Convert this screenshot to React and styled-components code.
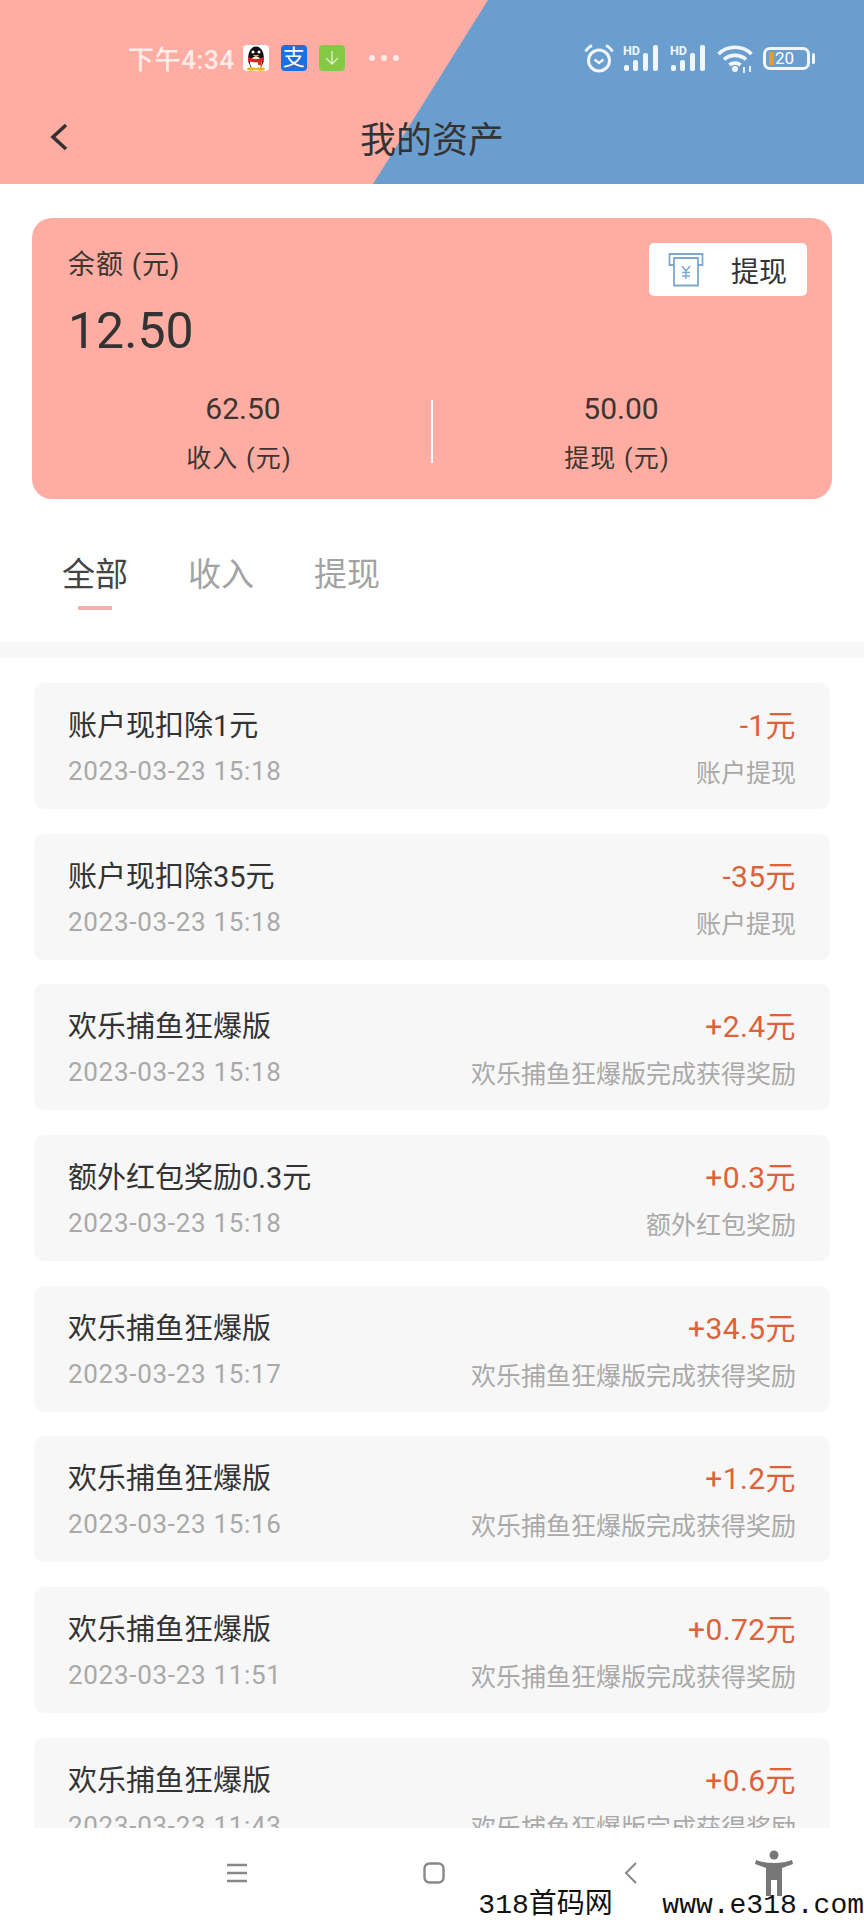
import React from 'react';
import styled, { createGlobalStyle } from 'styled-components';

const GlobalStyle = createGlobalStyle`
    html, body {
        margin: 0;
        padding: 0;
        background: #ffffff;
    }
    body {
        font-family: Roboto, "Noto Sans CJK SC", sans-serif;
        color: #333333;
    }
`;

const Page = styled.div`
    position: relative;
    width: 864px;
    height: 1920px;
    display: flex;
    flex-direction: column;
    overflow: hidden;
    background: #ffffff;
`;

const Header = styled.header`
    position: relative;
    height: 184px;
    flex: none;
    background: #ffada3;

    &::before {
        content: '';
        position: absolute;
        inset: 0;
        background: #6a9ecf;
        clip-path: polygon(488px 0, 864px 0, 864px 184px, 373px 184px);
    }
`;

const StatusBar = styled.div`
    position: relative;
    height: 68px;
    padding: 24px 49px 0 128px;
    display: flex;
    align-items: center;
    justify-content: space-between;
`;

const StatusGroup = styled.div`
    display: flex;
    align-items: center;
    gap: ${(props) => props.$gap}px;
`;

const Clock = styled.span`
    font-size: 26px;
    font-weight: 500;
    color: rgba(255, 255, 255, 0.78);
    margin: -2px -4px 0 0;
    letter-spacing: 0.6px;
`;

const AppBadge = styled.div`
    width: 26px;
    height: 26px;
    border-radius: 4px;
    background: ${(props) => props.$bg};
    display: flex;
    align-items: center;
    justify-content: center;
    color: #ffffff;
    font-size: 22px;
    line-height: 26px;
    overflow: hidden;
`;

const Dots = styled.div`
    display: flex;
    gap: 6px;
    margin-left: 12px;
`;

const Dot = styled.i`
    width: 6px;
    height: 6px;
    border-radius: 50%;
    background: rgba(255, 255, 255, 0.75);
`;

const Battery = styled.div`
    position: relative;
    width: 47px;
    height: 23px;
    box-sizing: border-box;
    border: 3px solid #f2f6fb;
    border-radius: 7px;
    margin-right: 5px;
    display: flex;
    align-items: center;
    padding-left: 3px;
    gap: 1px;
    color: #ffffff;
    font-size: 17px;
    line-height: 17px;

    &::after {
        content: '';
        position: absolute;
        right: -8px;
        top: 3px;
        width: 3px;
        height: 11px;
        border-radius: 2px;
        background: #f2f6fb;
    }
`;

const BatteryLevel = styled.i`
    width: 5px;
    height: 13px;
    border-radius: 1px;
    background: #e99a2e;
`;

const NavBar = styled.div`
    position: relative;
    height: 90px;
    display: grid;
    grid-template-columns: 1fr auto 1fr;
    align-items: center;
    padding: 0 50px;
`;

const PageTitle = styled.h1`
    margin: 0;
    font-size: 36px;
    font-weight: 400;
    color: #333333;
    white-space: nowrap;
`;

const SummaryCard = styled.section`
    margin: 34px 32px 0;
    border-radius: 20px;
    background: #ffada3;
    padding: 25px 0 20px;
    flex: none;
`;

const SummaryTop = styled.div`
    display: flex;
    justify-content: space-between;
    align-items: flex-start;
    padding: 0 25px 0 36px;
`;

const BalanceLabel = styled.div`
    margin-top: 1px;
    font-size: 27px;
    line-height: 42px;
    letter-spacing: 1px;
    color: #3c3532;
`;

const BalanceValue = styled.div`
    margin-top: 15px;
    font-size: 50px;
    line-height: 60px;
    color: #333333;
`;

const WithdrawButton = styled.button`
    width: 158px;
    height: 53px;
    border: 0;
    border-radius: 5px;
    background: #ffffff;
    padding: 0 0 0 19px;
    display: flex;
    align-items: center;
    gap: 27px;
    font-family: inherit;
    font-size: 28px;
    color: #333333;
`;

const StatsRow = styled.div`
    margin-top: 28px;
    padding: 0 23px;
    display: flex;
    align-items: flex-start;
`;

const Stat = styled.div`
    flex: 1;
    text-align: center;
    color: #3c3532;
`;

const StatValue = styled.div`
    font-size: 30px;
    line-height: 40px;
`;

const StatLabel = styled.div`
    margin-top: 10px;
    font-size: 25px;
    line-height: 40px;
    letter-spacing: 1.2px;
    padding-right: 8px;
`;

const StatDivider = styled.div`
    width: 2px;
    height: 63px;
    margin-top: 11px;
    background: #ffffff;
    flex: none;
`;

const Tabs = styled.nav`
    flex: none;
    display: flex;
    gap: 60px;
    padding: 54px 0 32px 62px;
`;

const Tab = styled.div`
    display: flex;
    flex-direction: column;
    align-items: center;
    font-size: 33px;
    line-height: 44px;
    color: ${(props) => (props.$active ? '#444444' : '#a3a3a3')};

    &::after {
        content: '';
        width: 34px;
        height: 4px;
        margin-top: 9px;
        background: ${(props) => (props.$active ? '#f0b0ab' : 'transparent')};
    }
`;

const Band = styled.div`
    flex: none;
    height: 16px;
    background: #f7f7f7;
`;

const List = styled.div`
    flex: 1;
    min-height: 0;
    overflow: hidden;
    padding: 25px 34px 0;
    display: flex;
    flex-direction: column;
    gap: 24.7px;
`;

const TxCard = styled.article`
    flex: none;
    height: 126px;
    box-sizing: border-box;
    padding: 20px 34px 17px;
    border-radius: 10px;
    background: #f7f7f7;
`;

const TxRow = styled.div`
    display: flex;
    justify-content: space-between;
    align-items: center;
    height: 40px;
    margin-bottom: 8px;
    white-space: nowrap;
`;

const TxTitle = styled.span`
    font-size: 29px;
    color: #333333;
`;

const TxAmount = styled.span`
    font-size: 30px;
    letter-spacing: 0.4px;
    color: #de6238;
`;

const TxMeta = styled.span`
    font-size: 25px;
    color: #a9a9a9;
`;

const TxTime = styled(TxMeta)`
    font-size: 26px;
    letter-spacing: 0.7px;
`;

const BottomBar = styled.div`
    flex: none;
    height: 92px;
    box-sizing: border-box;
    padding: 0 0 2px 138px;
    display: grid;
    grid-template-columns: repeat(3, 197px);
    justify-items: center;
    align-items: center;
    background: #ffffff;
`;

const AccessibilityIcon = styled.svg`
    position: absolute;
    left: 755px;
    top: 1850px;
`;

const Watermark = styled.div`
    position: absolute;
    right: 0;
    bottom: 0;
    font-family: "Liberation Mono", "Noto Sans CJK SC", monospace;
    font-size: 28px;
    line-height: 28px;
    color: #111111;
    white-space: pre;
    word-spacing: 8px;
`;

const QQIcon = () => (
    <svg width="22" height="25" viewBox="0 0 22 25">
        <ellipse cx="11" cy="12" rx="8" ry="11.5" fill="#111" />
        <ellipse cx="11" cy="17" rx="6" ry="6.5" fill="#fff" />
        <path d="M3 11c5 2.500 11 2.500 16 0v3.500c-5 2.500-11 2.500-16 0z" fill="#d8261c" />
        <path d="M13 15l3.500-.5v5.500l-3.500-1.500z" fill="#d8261c" />
        <circle cx="8" cy="6" r="1.500" fill="#fff" />
        <circle cx="14" cy="6" r="1.500" fill="#fff" />
        <path d="M7.500 9h7l-3.500 2.200z" fill="#f2b21c" />
        <ellipse cx="6.500" cy="23" rx="4.500" ry="1.700" fill="#f2b21c" />
        <ellipse cx="15.500" cy="23" rx="4.500" ry="1.700" fill="#f2b21c" />
    </svg>
);

const DownloadIcon = () => (
    <svg width="18" height="18" viewBox="0 0 18 18" fill="none" stroke="#dff0c8" strokeWidth="1.4">
        <path d="M9 2v13M3 9l6 6 6-6" />
    </svg>
);

const AlarmIcon = () => (
    <svg width="30" height="29" viewBox="0 0 30 29" fill="none" stroke="#f2f6fb">
        <circle cx="15" cy="16.500" r="10.500" strokeWidth="3" />
        <path d="M10.500 15.500 15 19l4.500-3.500" strokeWidth="2.400" />
        <path d="M1.500 7.500C3 4.500 5 3 8 1.500M28.500 7.500C27 4.500 25 3 22 1.500" strokeWidth="2.600" />
    </svg>
);

const SignalIcon = () => (
    <svg width="38" height="28" viewBox="0 0 38 28" fill="#f2f6fb">
        <text x="0" y="11" fontSize="12.500" fontWeight="700" fontFamily="Roboto, sans-serif">HD</text>
        <rect x="1" y="21" width="5" height="6" rx="2" />
        <rect x="10" y="16" width="5" height="11" rx="2" />
        <rect x="20" y="9" width="5" height="18" rx="2" />
        <rect x="30" y="1" width="5" height="26" rx="2" />
    </svg>
);

const WifiIcon = () => (
    <svg width="37" height="29" viewBox="0 0 37 29" fill="none" stroke="#f2f6fb" strokeWidth="3.600">
        <path d="M1.500 10C10.500 1 25.500 1 34.500 10" />
        <path d="M7 15.500c6-5.500 16-5.500 22 0" />
        <path d="M12.500 21c3-2.500 8-2.500 11 0" />
        <circle cx="18" cy="25" r="3" fill="#f2f6fb" stroke="none" />
        <path d="M27 23v6M33 22v6" strokeWidth="1.800" />
    </svg>
);

const WithdrawIcon = () => (
    <svg width="36" height="34" viewBox="0 0 36 34" fill="none" stroke="#7ea9cc" strokeWidth="1.800">
        <path d="M6 12H1.500V1h33v11H30" />
        <path d="M6 5h24v27.500H6z" />
        <path d="M14 13l4 5 4-5M18 18v8M14 19.500h8M14 23h8" strokeWidth="1.500" />
    </svg>
);

const BackIcon = () => (
    <svg width="18" height="28" viewBox="0 0 18 28" fill="none" stroke="#333" strokeWidth="3.600">
        <path d="M16 2 3 14l13 12" />
    </svg>
);

const MenuIcon = () => (
    <svg width="22" height="20" viewBox="0 0 22 20" fill="none" stroke="#888" strokeWidth="2.400">
        <path d="M1 2h20M1 10h20M1 18h20" />
    </svg>
);

const HomeIcon = () => (
    <svg width="22" height="22" viewBox="0 0 22 22" fill="none" stroke="#888" strokeWidth="2.400">
        <rect x="1.500" y="1.500" width="19" height="19" rx="5" />
    </svg>
);

const PrevIcon = () => (
    <svg width="14" height="22" viewBox="0 0 14 22" fill="none" stroke="#888" strokeWidth="2">
        <path d="M12 1 2 11l10 10" />
    </svg>
);

const transactions = [
    { title: '账户现扣除1元', time: '2023-03-23 15:18', amount: '-1元', note: '账户提现' },
    { title: '账户现扣除35元', time: '2023-03-23 15:18', amount: '-35元', note: '账户提现' },
    { title: '欢乐捕鱼狂爆版', time: '2023-03-23 15:18', amount: '+2.4元', note: '欢乐捕鱼狂爆版完成获得奖励' },
    { title: '额外红包奖励0.3元', time: '2023-03-23 15:18', amount: '+0.3元', note: '额外红包奖励' },
    { title: '欢乐捕鱼狂爆版', time: '2023-03-23 15:17', amount: '+34.5元', note: '欢乐捕鱼狂爆版完成获得奖励' },
    { title: '欢乐捕鱼狂爆版', time: '2023-03-23 15:16', amount: '+1.2元', note: '欢乐捕鱼狂爆版完成获得奖励' },
    { title: '欢乐捕鱼狂爆版', time: '2023-03-23 11:51', amount: '+0.72元', note: '欢乐捕鱼狂爆版完成获得奖励' },
    { title: '欢乐捕鱼狂爆版', time: '2023-03-23 11:43', amount: '+0.6元', note: '欢乐捕鱼狂爆版完成获得奖励' },
];

const App = () => {
    return (
        <Page>
            <GlobalStyle />
            <Header>
                <StatusBar>
                    <StatusGroup $gap={12}>
                        <Clock>下午4:34</Clock>
                        <AppBadge $bg="#ffffff"><QQIcon /></AppBadge>
                        <AppBadge $bg="#1f6fde">支</AppBadge>
                        <AppBadge $bg="#84c943"><DownloadIcon /></AppBadge>
                        <Dots>
                            <Dot />
                            <Dot />
                            <Dot />
                        </Dots>
                    </StatusGroup>
                    <StatusGroup $gap={9}>
                        <AlarmIcon />
                        <SignalIcon />
                        <SignalIcon />
                        <WifiIcon />
                        <Battery>
                            <BatteryLevel />
                            20
                        </Battery>
                    </StatusGroup>
                </StatusBar>
                <NavBar>
                    <BackIcon />
                    <PageTitle>我的资产</PageTitle>
                </NavBar>
            </Header>

            <SummaryCard>
                <SummaryTop>
                    <div>
                        <BalanceLabel>余额 (元)</BalanceLabel>
                        <BalanceValue>12.50</BalanceValue>
                    </div>
                    <WithdrawButton>
                        <WithdrawIcon />
                        提现
                    </WithdrawButton>
                </SummaryTop>
                <StatsRow>
                    <Stat>
                        <StatValue>62.50</StatValue>
                        <StatLabel>收入 (元)</StatLabel>
                    </Stat>
                    <StatDivider />
                    <Stat>
                        <StatValue>50.00</StatValue>
                        <StatLabel>提现 (元)</StatLabel>
                    </Stat>
                </StatsRow>
            </SummaryCard>

            <Tabs>
                <Tab $active>全部</Tab>
                <Tab>收入</Tab>
                <Tab>提现</Tab>
            </Tabs>
            <Band />

            <List>
                {transactions.map((item, index) => (
                    <TxCard key={index}>
                        <TxRow>
                            <TxTitle>{item.title}</TxTitle>
                            <TxAmount>{item.amount}</TxAmount>
                        </TxRow>
                        <TxRow>
                            <TxTime>{item.time}</TxTime>
                            <TxMeta>{item.note}</TxMeta>
                        </TxRow>
                    </TxCard>
                ))}
            </List>

            <BottomBar>
                <MenuIcon />
                <HomeIcon />
                <PrevIcon />
            </BottomBar>
            <AccessibilityIcon width="38" height="46" viewBox="0 0 38 46" fill="#777">
                <circle cx="19" cy="5" r="4.500" />
                <path d="M1 10c5 2 11 3 18 3s13-1 18-3l1 4-11 4v28h-5V30h-6v16h-5V18L0 14z" />
            </AccessibilityIcon>
            <Watermark>318首码网  www.e318.com</Watermark>
        </Page>
    );
};

export default App;
